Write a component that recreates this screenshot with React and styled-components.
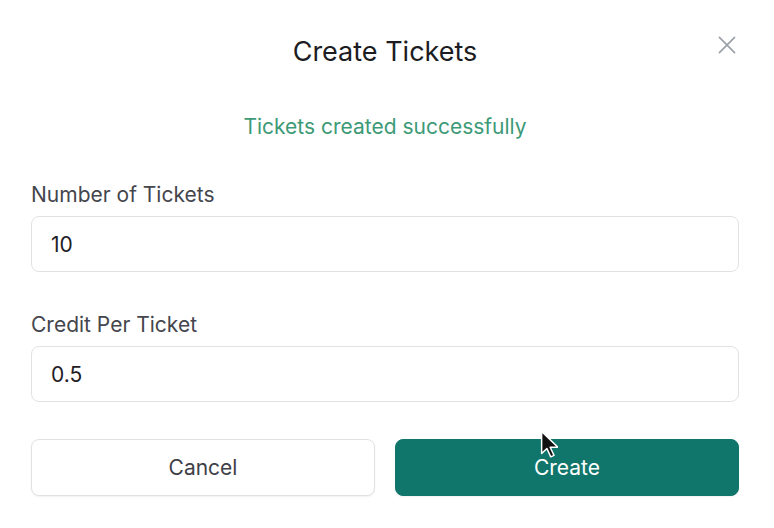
import React, { useState } from 'react';
import styled, { createGlobalStyle } from 'styled-components';

const GlobalStyle = createGlobalStyle`
  * { box-sizing: border-box; }
  body {
    margin: 0;
    background: #ffffff;
    font-family: Inter, "Liberation Sans", Arial, sans-serif;
  }
`;

const Dialog = styled.div`
  position: relative;
  width: 774px;
  height: 528px;
  background: #ffffff;
  padding: 33px 35px 0 31px;
  display: flex;
  flex-direction: column;
`;

const Title = styled.h2`
  margin: 0;
  text-align: center;
  font-size: 27px;
  line-height: 38px;
  font-weight: 400;
  color: #1c1c22;
`;

const CloseButton = styled.button`
  position: absolute;
  top: 31px;
  right: 33px;
  width: 28px;
  height: 28px;
  padding: 0;
  border: none;
  background: none;
  color: #9aa0a8;
  display: flex;
  align-items: center;
  justify-content: center;
  cursor: pointer;
`;

const Success = styled.p`
  margin: 43px 0 0;
  text-align: center;
  font-size: 21px;
  color: #3d9a76;
  line-height: 26px;
`;

const Field = styled.div`
  display: flex;
  flex-direction: column;
  margin-top: ${p => p.$top}px;
`;

const Label = styled.label`
  font-size: 21px;
  color: #45464d;
  line-height: 26px;
  margin-bottom: 8px;
`;

const Input = styled.input`
  height: 56px;
  border: 1px solid #e1e2e5;
  border-radius: 8px;
  padding: 0 19px;
  font-family: inherit;
  font-size: 21px;
  color: #1f2026;
  outline: none;
  background: #ffffff;
`;

const Actions = styled.div`
  display: grid;
  grid-template-columns: 1fr 1fr;
  gap: 20px;
  margin-top: 37px;
`;

const Button = styled.button`
  height: 57px;
  border-radius: 8px;
  font-family: inherit;
  font-size: 21px;
  cursor: pointer;
  border: 1px solid ${p => (p.$primary ? '#10756b' : '#e1e2e5')};
  background: ${p => (p.$primary ? '#10756b' : '#ffffff')};
  color: ${p => (p.$primary ? '#ffffff' : '#3f4047')};
  box-shadow: 0 1px 2px rgba(0, 0, 0, 0.06);
`;

const Pointer = styled.svg`
  position: absolute;
  left: 540px;
  top: 430px;
  pointer-events: none;
`;

export default function App() {
  const [count, setCount] = useState('10');
  const [credit, setCredit] = useState('0.5');

  return (
    <>
      <GlobalStyle />
      <Dialog>
        <Title>Create Tickets</Title>
        <CloseButton aria-label="Close">
          <svg width="26" height="26" viewBox="0 0 24 24" fill="none" stroke="currentColor" strokeWidth="1.5" strokeLinecap="round">
            <path d="M5 5l14 14M19 5L5 19" />
          </svg>
        </CloseButton>
        <Success>Tickets created successfully</Success>
        <Field $top={42}>
          <Label>Number of Tickets</Label>
          <Input value={count} onChange={e => setCount(e.target.value)} />
        </Field>
        <Field $top={40}>
          <Label>Credit Per Ticket</Label>
          <Input value={credit} onChange={e => setCredit(e.target.value)} />
        </Field>
        <Actions>
          <Button>Cancel</Button>
          <Button $primary>Create</Button>
        </Actions>
        <Pointer width="18" height="28" viewBox="0 0 12 19">
          <path d="M1 1v15l3.6-3.4 2.6 5.6 2.2-1-2.6-5.5H12z" fill="#111" stroke="#fff" strokeWidth="1" strokeLinejoin="round" />
        </Pointer>
      </Dialog>
    </>
  );
}
